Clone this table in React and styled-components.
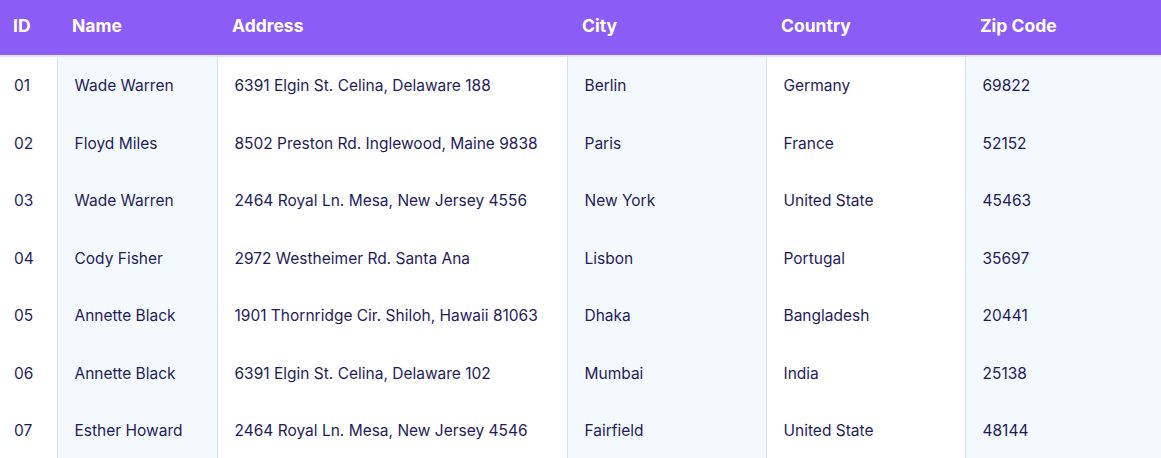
import styled, { createGlobalStyle } from "styled-components";

const rows = [
  ["01", "Wade Warren", "6391 Elgin St. Celina, Delaware 188", "Berlin", "Germany", "69822"],
  ["02", "Floyd Miles", "8502 Preston Rd. Inglewood, Maine 9838", "Paris", "France", "52152"],
  ["03", "Wade Warren", "2464 Royal Ln. Mesa, New Jersey 4556", "New York", "United State", "45463"],
  ["04", "Cody Fisher", "2972 Westheimer Rd. Santa Ana", "Lisbon", "Portugal", "35697"],
  ["05", "Annette Black", "1901 Thornridge Cir. Shiloh, Hawaii 81063", "Dhaka", "Bangladesh", "20441"],
  ["06", "Annette Black", "6391 Elgin St. Celina, Delaware 102", "Mumbai", "India", "25138"],
  ["07", "Esther Howard", "2464 Royal Ln. Mesa, New Jersey 4546", "Fairfield", "United State", "48144"],
];

const columns = [
  { label: "ID", width: 57 },
  { label: "Name", width: 160 },
  { label: "Address", width: 350 },
  { label: "City", width: 199 },
  { label: "Country", width: 199 },
  { label: "Zip Code", width: 196 },
];

const GlobalStyle = createGlobalStyle`
  body {
    margin: 0;
    background: #ffffff;
    font-family: Inter, "Liberation Sans", sans-serif;
  }
`;

export default function App() {
  return (
    <>
      <GlobalStyle />
      <Table>
        <colgroup>
          {columns.map((c) => (
            <col key={c.label} style={{ width: c.width }} />
          ))}
        </colgroup>
        <thead>
          <tr>
            {columns.map((c, i) => (
              <HeadCell key={c.label} $first={i === 0}>
                {c.label}
              </HeadCell>
            ))}
          </tr>
        </thead>
        <tbody>
          {rows.map((row) => (
            <tr key={row[0]}>
              {row.map((value, i) => (
                <Cell key={i} $shaded={i % 2 === 1} $first={i === 0}>
                  {value}
                </Cell>
              ))}
            </tr>
          ))}
        </tbody>
      </Table>
    </>
  );
}

const Table = styled.table`
  width: 1161px;
  table-layout: fixed;
  border-collapse: collapse;
  border-spacing: 0;
`;

const HeadCell = styled.th`
  height: 50px;
  padding: 0 0 5px ${({ $first }) => ($first ? "13px" : "15px")};
  background: #8b5cf6;
  border-bottom: 2px solid #e6e6ee;
  color: #ffffff;
  font-size: 17.5px;
  font-weight: 700;
  text-align: left;
  white-space: nowrap;
`;

const Cell = styled.td`
  height: 57.5px;
  padding: 0 0 0 ${({ $first }) => ($first ? "14px" : "17px")};
  background: ${({ $shaded }) => ($shaded ? "#f4f9fe" : "#ffffff")};
  border-left: ${({ $first }) => ($first ? "none" : "1px solid #d5e1ef")};
  color: #1f1c5c;
  font-size: 15.5px;
  font-weight: 400;
  white-space: nowrap;
`;
